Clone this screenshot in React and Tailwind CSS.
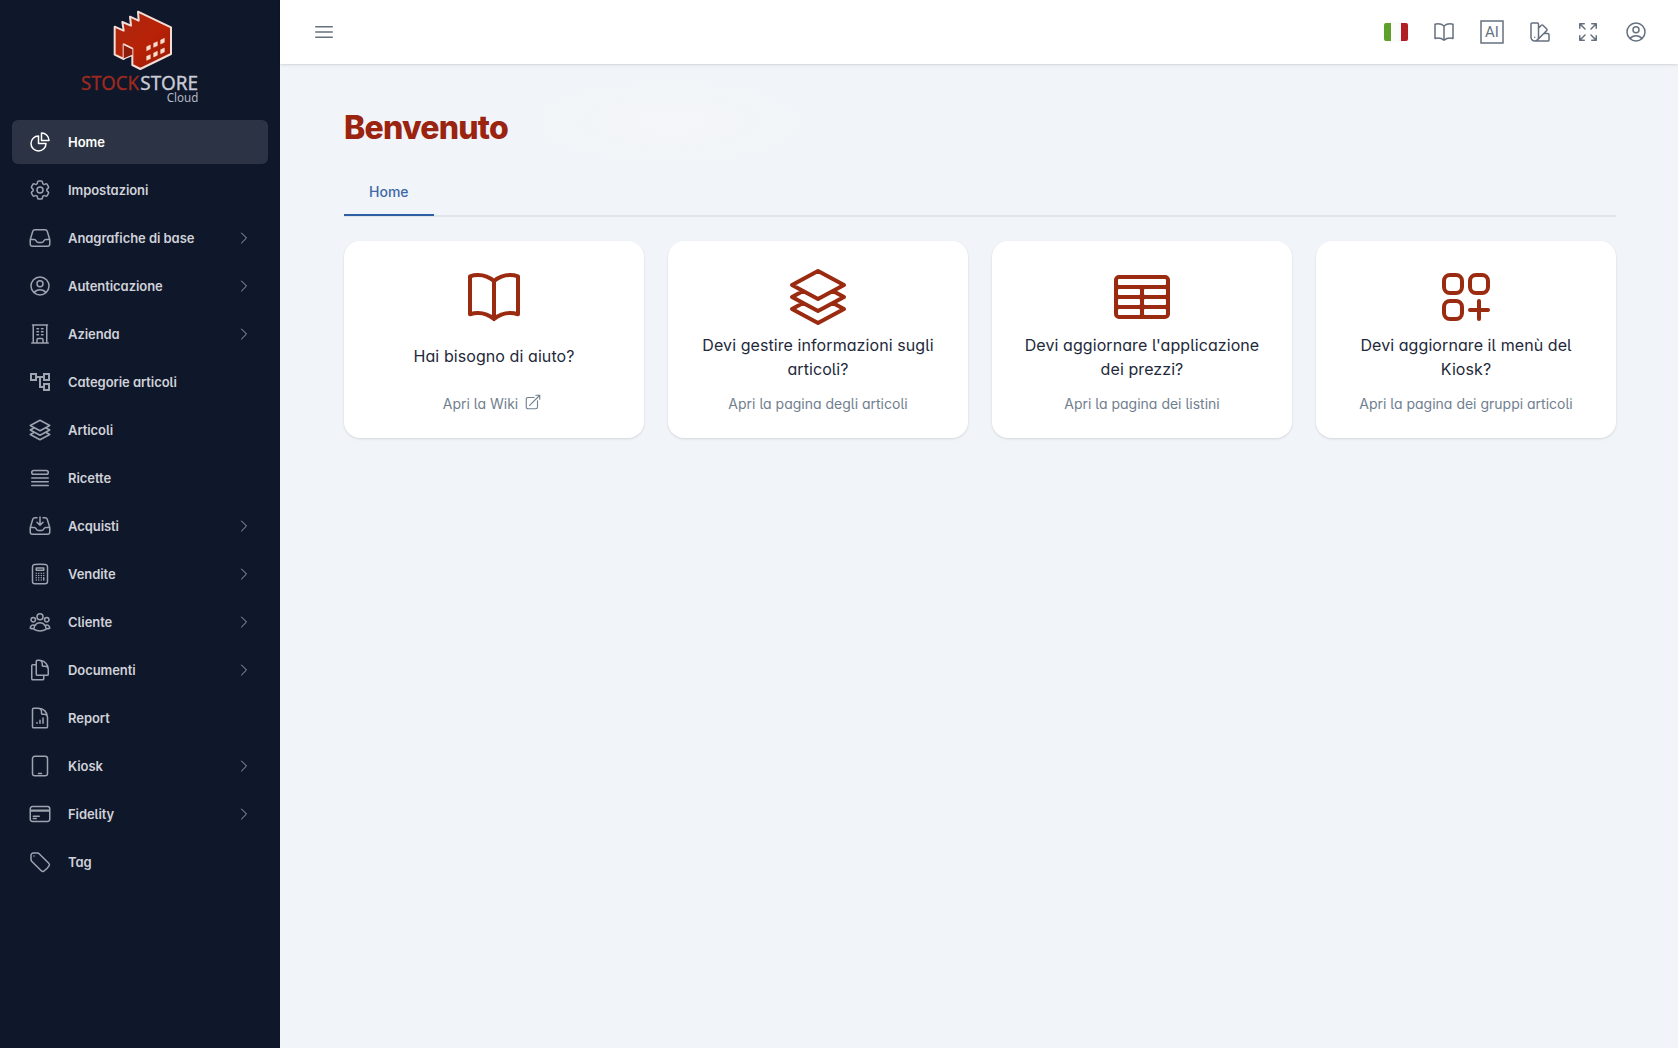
import {
  HiOutlineArrowsPointingOut,
  HiOutlineArrowTopRightOnSquare,
  HiOutlineBars3,
  HiOutlineBookOpen,
  HiOutlineBuildingOffice,
  HiOutlineCalculator,
  HiOutlineChartPie,
  HiOutlineChevronRight,
  HiOutlineCog6Tooth,
  HiOutlineCreditCard,
  HiOutlineDeviceTablet,
  HiOutlineDocumentChartBar,
  HiOutlineDocumentDuplicate,
  HiOutlineInbox,
  HiOutlineInboxArrowDown,
  HiOutlineQueueList,
  HiOutlineSquare3Stack3D,
  HiOutlineSquaresPlus,
  HiOutlineSwatch,
  HiOutlineTableCells,
  HiOutlineTag,
  HiOutlineUserCircle,
  HiOutlineUserGroup,
} from "react-icons/hi2";
import { MdOutlineAccountTree } from "react-icons/md";

const navItems = [
  { label: "Home", icon: HiOutlineChartPie, active: true },
  { label: "Impostazioni", icon: HiOutlineCog6Tooth },
  { label: "Anagrafiche di base", icon: HiOutlineInbox, children: true },
  { label: "Autenticazione", icon: HiOutlineUserCircle, children: true },
  { label: "Azienda", icon: HiOutlineBuildingOffice, children: true },
  { label: "Categorie articoli", icon: MdOutlineAccountTree },
  { label: "Articoli", icon: HiOutlineSquare3Stack3D },
  { label: "Ricette", icon: HiOutlineQueueList },
  { label: "Acquisti", icon: HiOutlineInboxArrowDown, children: true },
  { label: "Vendite", icon: HiOutlineCalculator, children: true },
  { label: "Cliente", icon: HiOutlineUserGroup, children: true },
  { label: "Documenti", icon: HiOutlineDocumentDuplicate, children: true },
  { label: "Report", icon: HiOutlineDocumentChartBar },
  { label: "Kiosk", icon: HiOutlineDeviceTablet, children: true },
  { label: "Fidelity", icon: HiOutlineCreditCard, children: true },
  { label: "Tag", icon: HiOutlineTag },
];

const cards = [
  { title: "Hai bisogno di aiuto?", link: "Apri la Wiki", icon: HiOutlineBookOpen, external: true },
  { title: "Devi gestire informazioni sugli articoli?", link: "Apri la pagina degli articoli", icon: HiOutlineSquare3Stack3D },
  { title: "Devi aggiornare l'applicazione dei prezzi?", link: "Apri la pagina dei listini", icon: HiOutlineTableCells },
  { title: "Devi aggiornare il menù del Kiosk?", link: "Apri la pagina dei gruppi articoli", icon: HiOutlineSquaresPlus },
];

function Logo() {
  return (
    <svg viewBox="0 0 480 345" className="w-[160px] h-[115px] shrink-0">
      <defs>
        <linearGradient id="wall" x1="0" y1="0" x2="1" y2="1">
          <stop offset="0" stopColor="#a82812" />
          <stop offset="0.55" stopColor="#b82206" />
          <stop offset="1" stopColor="#981a06" />
        </linearGradient>
      </defs>
      <path
        d="M164 80 L191 92 L187 66 L213 77 L210 50 L236 62 L234 35 L333 82 V162 L241 207 L217 195 V146 L191 133 V177 L164 164 Z"
        fill="url(#wall)"
        stroke="#f3ddd6"
        strokeWidth="6"
        strokeLinejoin="round"
      />
      {/* doorway floor */}
      <path d="M191 133 L217 146 V166 L191 177 Z" fill="#8e1c0b" />
      <path d="M191 177 L217 166" stroke="#f3ddd6" strokeWidth="4" />
      <path d="M191 133 L217 146" stroke="#f3ddd6" strokeWidth="4" />
      <path d="M260 140l11-5v12l-11 5zM281 130l11-5v12l-11 5zM302 120l11-5v12l-11 5zM260 169l11-5v12l-11 5zM281 159l11-5v12l-11 5zM302 149l11-5v12l-11 5z" fill="#f7dfd0" stroke="#f7dfd0" strokeWidth="1.5" />
      <text x="63" y="269" fontSize="59" fontFamily="Noto Sans, sans-serif" fill="#9c2a20" stroke="#9c2a20" textLength="174" lengthAdjust="spacingAndGlyphs">STOCK</text>
      <text x="241" y="269" fontSize="59" fontFamily="Noto Sans, sans-serif" fill="#c9ccd6" stroke="#c9ccd6" textLength="173" lengthAdjust="spacingAndGlyphs">STORE</text>
      <text x="320" y="305" fontSize="38" fontFamily="Noto Sans, sans-serif" fill="#b4b8c4" textLength="95" lengthAdjust="spacingAndGlyphs">Cloud</text>
    </svg>
  );
}

function Sidebar() {
  return (
    <aside className="w-[280px] shrink-0 bg-[#0f172a]">
      <div className="flex justify-center h-[120px]">
        <Logo />
      </div>
      <nav className="flex flex-col gap-1 px-3">
        {navItems.map((item) => {
          const Icon = item.icon;
          return (
            <a
              key={item.label}
              className={`flex items-center h-11 px-4 rounded-md text-[13px] tracking-[-0.06px] font-semibold ${
                item.active ? "bg-[#2c3344] text-white" : "text-[#cfd2d9]"
              }`}
            >
              <Icon className={`size-6 mr-4 ${item.active ? "text-white" : "text-[#9ea3b0]"}`} />
              <span className="flex-1 pt-0.5">{item.label}</span>
              {item.children && <HiOutlineChevronRight className="size-4 text-[#9ea3b0]" />}
            </a>
          );
        })}
      </nav>
    </aside>
  );
}

function Header() {
  return (
    <header className="flex items-center justify-between h-16 shrink-0 pl-8 pr-[30px] bg-white text-[#66717f] shadow z-10">
      <HiOutlineBars3 className="size-6" />
      <div className="flex items-center gap-6">
        <div className="flex w-6 h-[18px] rounded-[2px] overflow-hidden shadow-[0_0_1px_#c8ccd2]">
          <div className="w-[7px] bg-[#5fa02c]" />
          <div className="flex-1 bg-[#fbfbfb]" />
          <div className="w-[7px] bg-[#b32024]" />
        </div>
        <HiOutlineBookOpen className="size-6" />
        <svg viewBox="0 0 24 24" className="size-6 [font-feature-settings:normal]">
          <rect x="1" y="1" width="22" height="22" fill="none" stroke="currentColor" strokeWidth="1.5" />
          <text x="12" y="17" fontSize="15" textAnchor="middle" fontFamily="Roboto, sans-serif" fill="currentColor">AI</text>
        </svg>
        <HiOutlineSwatch className="size-6" />
        <HiOutlineArrowsPointingOut className="size-6" />
        <HiOutlineUserCircle className="size-6" />
      </div>
    </header>
  );
}

function Card({ title, link, icon: Icon, external }) {
  return (
    <div className="flex flex-col items-center h-[197px] px-6 pt-6 rounded-2xl bg-white shadow text-center">
      <Icon className="size-16 text-[#9a2a10]" />
      <div className={`flex items-center h-12 mt-1 text-base leading-6 tracking-[0.08px] text-[#1e293b] ${external ? "pb-0.5" : ""}`}>
        {title}
      </div>
      <div className="flex items-center h-5 mt-[13px] text-sm leading-5 text-[#71808f]">
        {link}
        {external && <HiOutlineArrowTopRightOnSquare className="size-[18px] ml-1.5 mr-[3px] mb-1" />}
      </div>
    </div>
  );
}

export default function App() {
  return (
    <div className="flex h-screen overflow-hidden font-['Inter',sans-serif] [font-feature-settings:'cv11','cv05']">
      <Sidebar />
      <div className="flex flex-col flex-1">
        <Header />
        <main className="flex-1 pl-[64px] pr-[62px] pt-[44px] bg-[#f1f5f9] bg-[radial-gradient(ellipse_160px_50px_at_390px_58px,#f4f6f8,#f1f5f9)]">
          <h1 className="text-[32px] leading-10 font-extrabold tracking-[-0.024em] text-[#9a2410]">Benvenuto</h1>
          <div className="flex mt-5 h-[49px] border-b-2 border-[#e0e5ed]">
            <button className="h-12 px-[25px] pt-0.5 border-b-2 border-[#2f5fa3] text-sm font-medium text-[#3f68a5]">Home</button>
          </div>
          <div className="grid grid-cols-4 gap-6 mt-6">
            {cards.map((card) => (
              <Card key={card.title} {...card} />
            ))}
          </div>
        </main>
      </div>
    </div>
  );
}
